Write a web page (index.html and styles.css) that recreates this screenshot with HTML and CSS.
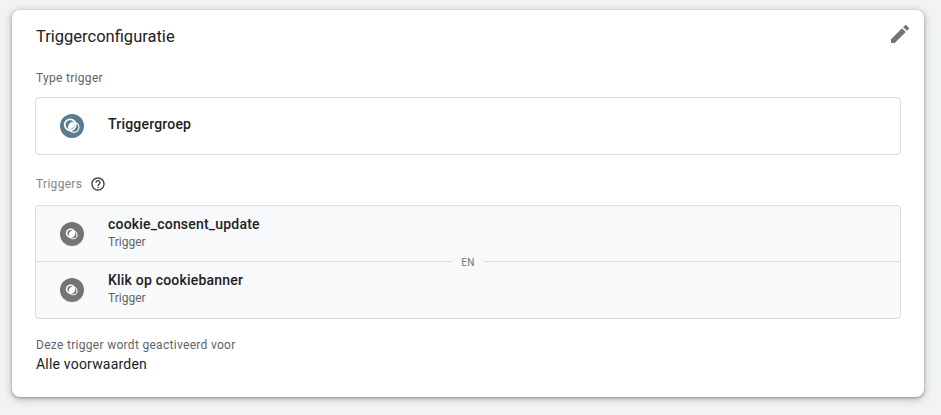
FILE: index.html
```html
<!DOCTYPE html>
<html lang="nl">
<head>
<meta charset="utf-8">
<title>Triggerconfiguratie</title>
<link rel="stylesheet" href="styles.css">
</head>
<body>
<main class="card">
  <header class="card-header">
    <h2 class="card-title">Triggerconfiguratie</h2>
    <svg class="edit-icon" viewBox="0 0 24 24" aria-hidden="true"><path d="M3 17.25V21h3.75L17.81 9.94l-3.75-3.75L3 17.25zM20.71 7.04a1 1 0 0 0 0-1.41l-2.34-2.34a1 1 0 0 0-1.41 0l-1.83 1.83 3.75 3.75 1.83-1.83z"/></svg>
  </header>
  <div class="label type-label">Type trigger</div>
  <div class="type-box">
    <svg class="type-icon" viewBox="0 0 24 24" aria-hidden="true">
      <circle cx="12" cy="12" r="12" fill="#5b7c8f"/>
      <circle cx="10.200" cy="10.800" r="5.500" fill="none" stroke="#fff" stroke-width="1.800"/>
      <circle cx="13.800" cy="13.200" r="5.200" fill="none" stroke="#fff" stroke-width="1.100"/>
      <path d="M9 15.200a5.200 5.200 0 0 1 5.600-7.200 5.500 5.500 0 0 1-5.600 7.200z" fill="#fff"/>
    </svg>
    <span class="item-name">Triggergroep</span>
  </div>
  <div class="label triggers-label">
    <span>Triggers</span>
    <svg class="help-icon" viewBox="0 0 24 24" aria-hidden="true"><path d="M11 18h2v-2h-2v2zm1-16C6.480 2 2 6.480 2 12s4.480 10 10 10 10-4.480 10-10S17.520 2 12 2zm0 18c-4.410 0-8-3.590-8-8s3.590-8 8-8 8 3.590 8 8-3.590 8-8 8zm0-14c-2.210 0-4 1.790-4 4h2c0-1.100.9-2 2-2s2 .9 2 2c0 2-3 1.750-3 5h2c0-2.250 3-2.500 3-5 0-2.210-1.790-4-4-4z"/></svg>
  </div>
  <div class="trigger-list">
    <div class="trigger-row">
      <svg class="row-icon" viewBox="0 0 24 24" aria-hidden="true">
        <circle cx="12" cy="12" r="12" fill="#757575"/>
        <circle cx="10.600" cy="11.200" r="4" fill="none" stroke="#fff" stroke-width="1.600"/>
        <circle cx="13.200" cy="12.900" r="3.900" fill="none" stroke="#fff" stroke-width="1.100"/>
        <path d="M9.800 15a3.900 3.900 0 0 1 4.200-6 4 4 0 0 1-4.200 6z" fill="#fff"/>
      </svg>
      <div class="row-text"><div class="item-name">cookie_consent_update</div><div class="item-sub">Trigger</div></div>
    </div>
    <div class="divider"><span class="divider-text">EN</span></div>
    <div class="trigger-row">
      <svg class="row-icon" viewBox="0 0 24 24" aria-hidden="true">
        <circle cx="12" cy="12" r="12" fill="#757575"/>
        <circle cx="10.600" cy="11.200" r="4" fill="none" stroke="#fff" stroke-width="1.600"/>
        <circle cx="13.200" cy="12.900" r="3.900" fill="none" stroke="#fff" stroke-width="1.100"/>
        <path d="M9.800 15a3.900 3.900 0 0 1 4.200-6 4 4 0 0 1-4.200 6z" fill="#fff"/>
      </svg>
      <div class="row-text"><div class="item-name">Klik op cookiebanner</div><div class="item-sub">Trigger</div></div>
    </div>
  </div>
  <div class="label fires-label">Deze trigger wordt geactiveerd voor</div>
  <div class="fires-value">Alle voorwaarden</div>
</main>
</body>
</html>
```
FILE: styles.css
```css
* { box-sizing: border-box; }
html, body { margin: 0; height: 100%; }
body {
  background: #f1f3f4;
  padding: 10px 17px 18px 12px;
  font-family: Roboto, "Liberation Sans", sans-serif;
  overflow: hidden;
}
.card {
  height: 387px;
  background: #fff;
  border-radius: 8px;
  box-shadow: 0 1px 3px rgba(60,64,67,.45), 0 2px 7px 2px rgba(60,64,67,.2);
  padding: 0 23px;
}
.card-header { display: flex; justify-content: space-between; align-items: center; height: 50px; }
.card-title { margin: 3px 0 0 1px; font-size: 16.500px; font-weight: 400; color: #202124; line-height: 50px; }
.edit-icon { width: 24px; height: 24px; fill: #757575; margin-right: -11px; margin-top: -2px; }
.label { font-size: 12px; line-height: 16px; color: #5f6368; letter-spacing: .3px; margin-left: 1px; }
.type-label { margin-top: 10px; }
.type-box {
  display: flex; align-items: center; height: 58px; margin-top: 11px;
  border: 1px solid #dadce0; border-radius: 4px; padding-left: 24px;
}
.type-icon { width: 24px; height: 24px; margin-right: 24px; flex: none; }
.type-box .item-name { margin-bottom: 4px; }
.item-name { font-size: 14px; font-weight: 500; line-height: 20px; color: #202124; letter-spacing: .2px; }
.item-sub { font-size: 12px; line-height: 16px; color: #5f6368; }
.row-text { margin-top: -4px; }
.triggers-label { display: flex; align-items: center; gap: 8px; margin-top: 21px; height: 16px; color: #80868b; }
.help-icon { width: 16px; height: 16px; fill: #3c4043; }
.trigger-list {
  margin-top: 13px; height: 114px; background: #f8f9fa;
  border: 1px solid #dadce0; border-radius: 4px;
  display: flex; flex-direction: column;
}
.trigger-row { display: flex; align-items: center; height: 55px; padding-left: 24px; padding-top: 1px; }
.row-icon { width: 24px; height: 24px; margin-right: 24px; flex: none; }
.divider { height: 1px; background: #dadce0; display: flex; justify-content: center; align-items: center; flex: none; }
.divider-text { background: #f8f9fa; padding: 0 9px; font-size: 10px; line-height: 14px; color: #6f7378; letter-spacing: .3px; position: relative; top: 1px; }
.fires-label { margin-top: 18px; }
.fires-value { font-size: 14px; line-height: 20px; color: #202124; margin: 1px 0 0 1px; letter-spacing: .2px; }
```
